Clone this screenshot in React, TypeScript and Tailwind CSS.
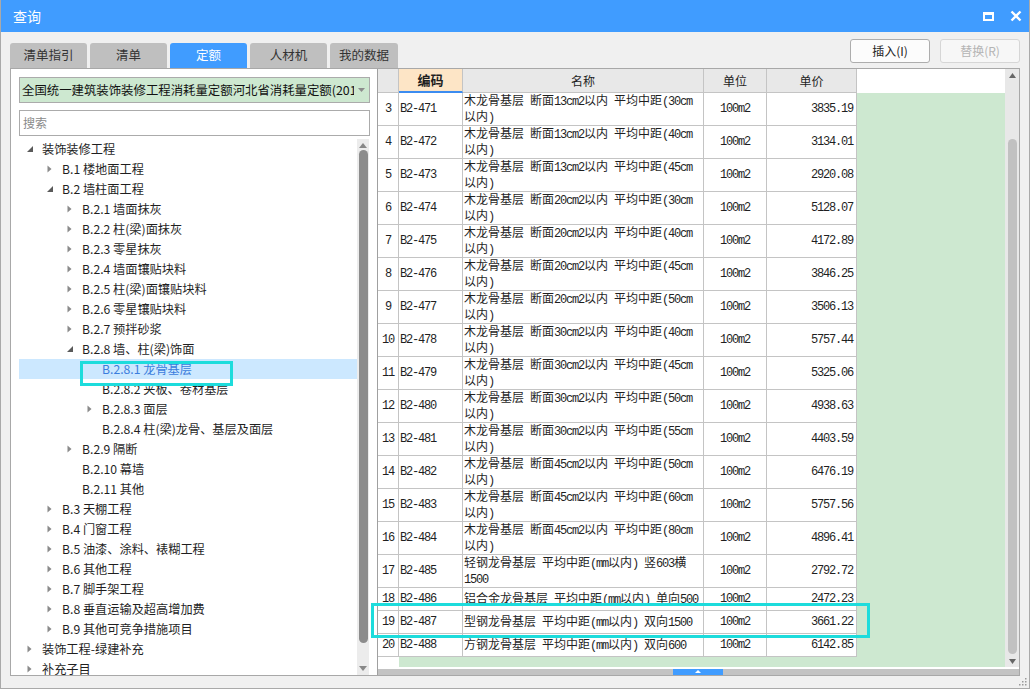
import React from 'react';

type TreeNode = { label: string; level: number; state: 'open' | 'closed' | 'leaf'; selected?: boolean };

const tree: TreeNode[] = [
  { label: '装饰装修工程', level: 0, state: 'open' },
  { label: 'B.1 楼地面工程', level: 1, state: 'closed' },
  { label: 'B.2 墙柱面工程', level: 1, state: 'open' },
  { label: 'B.2.1 墙面抹灰', level: 2, state: 'closed' },
  { label: 'B.2.2 柱(梁)面抹灰', level: 2, state: 'closed' },
  { label: 'B.2.3 零星抹灰', level: 2, state: 'closed' },
  { label: 'B.2.4 墙面镶贴块料', level: 2, state: 'closed' },
  { label: 'B.2.5 柱(梁)面镶贴块料', level: 2, state: 'closed' },
  { label: 'B.2.6 零星镶贴块料', level: 2, state: 'closed' },
  { label: 'B.2.7 预拌砂浆', level: 2, state: 'closed' },
  { label: 'B.2.8 墙、柱(梁)饰面', level: 2, state: 'open' },
  { label: 'B.2.8.1 龙骨基层', level: 3, state: 'leaf', selected: true },
  { label: 'B.2.8.2 夹板、卷材基层', level: 3, state: 'leaf' },
  { label: 'B.2.8.3 面层', level: 3, state: 'closed' },
  { label: 'B.2.8.4 柱(梁)龙骨、基层及面层', level: 3, state: 'leaf' },
  { label: 'B.2.9 隔断', level: 2, state: 'closed' },
  { label: 'B.2.10 幕墙', level: 2, state: 'leaf' },
  { label: 'B.2.11 其他', level: 2, state: 'leaf' },
  { label: 'B.3 天棚工程', level: 1, state: 'closed' },
  { label: 'B.4 门窗工程', level: 1, state: 'closed' },
  { label: 'B.5 油漆、涂料、裱糊工程', level: 1, state: 'closed' },
  { label: 'B.6 其他工程', level: 1, state: 'closed' },
  { label: 'B.7 脚手架工程', level: 1, state: 'closed' },
  { label: 'B.8 垂直运输及超高增加费', level: 1, state: 'closed' },
  { label: 'B.9 其他可竞争措施项目', level: 1, state: 'closed' },
  { label: '装饰工程-绿建补充', level: 0, state: 'closed' },
  { label: '补充子目', level: 0, state: 'closed' },
];

const indent = ['pl-[8px]', 'pl-[28px]', 'pl-[48px]', 'pl-[68px]'];

type Row = [string, string, string, string | null, string];

const wood = (sec: string, dist: string): [string, string] => [
  `木龙骨基层 断面${sec}cm2以内 平均中距(${dist}cm`,
  '以内)',
];

const rows: Row[] = [
  ['3', 'B2-471', ...wood('13', '30'), '3835.19'],
  ['4', 'B2-472', ...wood('13', '40'), '3134.01'],
  ['5', 'B2-473', ...wood('13', '45'), '2920.08'],
  ['6', 'B2-474', ...wood('20', '30'), '5128.07'],
  ['7', 'B2-475', ...wood('20', '40'), '4172.89'],
  ['8', 'B2-476', ...wood('20', '45'), '3846.25'],
  ['9', 'B2-477', ...wood('20', '50'), '3506.13'],
  ['10', 'B2-478', ...wood('30', '40'), '5757.44'],
  ['11', 'B2-479', ...wood('30', '45'), '5325.06'],
  ['12', 'B2-480', ...wood('30', '50'), '4938.63'],
  ['13', 'B2-481', ...wood('30', '55'), '4403.59'],
  ['14', 'B2-482', ...wood('45', '50'), '6476.19'],
  ['15', 'B2-483', ...wood('45', '60'), '5757.56'],
  ['16', 'B2-484', ...wood('45', '80'), '4896.41'],
  ['17', 'B2-485', '轻钢龙骨基层 平均中距(mm以内) 竖603横', '1500', '2792.72'],
  ['18', 'B2-486', '铝合金龙骨基层 平均中距(mm以内) 单向500', null, '2472.23'],
  ['19', 'B2-487', '型钢龙骨基层 平均中距(mm以内) 双向1500', null, '3661.22'],
  ['20', 'B2-488', '方钢龙骨基层 平均中距(mm以内) 双向600', null, '6142.85'],
];

const mono = "font-['Liberation_Mono',monospace] text-[12px] tracking-[-1.2px]";

function Mixed({ text }: { text: string }) {
  return (
    <>
      {text
        .split(/([\x20-\x7e]+)/)
        .filter(Boolean)
        .map((p, i) =>
          /^[\x20-\x7e]+$/.test(p) ? (
            <span key={i} className={mono}>
              {p}
            </span>
          ) : (
            <span key={i}>{p}</span>
          ),
        )}
    </>
  );
}

function TreeIcon({ state }: { state: TreeNode['state'] }) {
  if (state === 'open')
    return (
      <svg width="6" height="6" viewBox="0 0 6 6">
        <path d="M6 0 L6 6 L0 6 Z" fill="#5a5a5a" />
      </svg>
    );
  if (state === 'closed')
    return (
      <svg width="5" height="8" viewBox="0 0 5 8">
        <path d="M0.5 0.5 L4.5 4 L0.5 7.5 Z" fill="#8a8a8a" />
      </svg>
    );
  return null;
}

const tabs = ['清单指引', '清单', '定额', '人材机', '我的数据'];

export default function App() {
  return (
    <div className="relative flex h-[689px] w-[1030px] flex-col overflow-hidden border-x border-b border-[#a9a9a9] bg-[#f0f0f0] font-['Noto_Sans_CJK_SC','Noto_Sans',sans-serif] text-[12px] text-[#1f1f1f]">
      {/* title bar */}
      <div className="flex h-[32px] shrink-0 items-center justify-between bg-[#409cff] pl-[12px] pr-[7px]">
        <span className="text-[14px] text-white">查询</span>
        <div className="flex items-center gap-[16px]">
          <div className="h-[9px] w-[11px] border-2 border-t-[3px] border-white" />
          <svg width="12" height="12" viewBox="0 0 12 12">
            <path d="M1.5 1.5 L10.5 10.5 M10.5 1.5 L1.5 10.5" stroke="white" strokeWidth="2.4" />
          </svg>
        </div>
      </div>

      <div className="flex flex-1 flex-col px-[9px] pb-[12px] pt-[7px]">
        {/* tabs + buttons */}
        <div className="flex h-[29px] justify-between">
          <div className="flex gap-[3px] self-end">
            {tabs.map((t, i) => (
              <div
                key={t}
                className={
                  'flex h-[25px] items-center justify-center rounded-t-[3px] text-[12.5px] ' +
                  (i === 4 ? 'w-[68px] ' : 'w-[77px] ') +
                  (i === 2 ? 'bg-[#409cff] text-white' : 'bg-[#bfbfbf] text-[#333]')
                }
              >
                {t}
              </div>
            ))}
          </div>
          <div className="flex gap-[10px] pb-[5px]">
            <div className="flex h-[24px] w-[80px] items-center justify-center rounded-[3px] border border-[#adadad] bg-[#fcfcfc] text-[#222]">
              插入(I)
            </div>
            <div className="flex h-[24px] w-[80px] items-center justify-center rounded-[3px] border border-[#d6d6d6] bg-[#f7f7f7] text-[#b4b4b4]">
              替换(R)
            </div>
          </div>
        </div>

        {/* main panel */}
        <div className="flex h-[608px] border border-[#a8a8a8] bg-white">
          {/* left tree side */}
          <div className="flex w-[366px] flex-col pt-[8px]">
            <div className="ml-[8px] flex h-[26px] w-[351px] items-center border border-[#ababab] bg-[#cde8d0] pl-[2px] pr-[4px]">
              <span className="flex-1 overflow-hidden whitespace-nowrap text-[12.4px] text-[#111]">
                全国统一建筑装饰装修工程消耗量定额河北省消耗量定额(2012)
              </span>
              <svg width="7" height="4" viewBox="0 0 7 4" className="ml-[4px]">
                <path d="M0 0 L7 0 L3.5 4 Z" fill="#8c8c8c" />
              </svg>
            </div>
            <div className="ml-[8px] mt-[7px] flex h-[26px] w-[351px] items-center border border-[#ababab] bg-white pl-[3px] text-[#8a8a8a]">
              搜索
            </div>
            <div className="mt-[3px] flex min-h-0 flex-1 overflow-hidden">
              <div className="ml-[8px] w-[338px]">
                {tree.map((n) => (
                  <div
                    key={n.label}
                    className={
                      'flex h-[20px] items-center whitespace-nowrap ' +
                      indent[n.level] +
                      (n.selected ? ' bg-[#cce8ff] text-[#3b7ddd]' : '')
                    }
                  >
                    <div className="flex w-[15px] items-center">
                      <TreeIcon state={n.state} />
                    </div>
                    <span className="text-[12.2px] leading-[20px]">{n.label}</span>
                  </div>
                ))}
              </div>
              <div className="flex w-[12px] flex-col items-center bg-[#ececec] pt-[4px]">
                <svg width="8" height="5" viewBox="0 0 8 5">
                  <path d="M0 5 L4 0 L8 5 Z" fill="#888" />
                </svg>
                <div className="mt-[2px] h-[493px] w-[9px] rounded-full bg-[#8c8c8c]" />
                <div className="flex-1" />
                <svg width="8" height="5" viewBox="0 0 8 5" className="mb-[4px]">
                  <path d="M0 0 L8 0 L4 5 Z" fill="#888" />
                </svg>
              </div>
            </div>
          </div>

          {/* right grid side */}
          <div className="flex flex-1 flex-col border-l border-[#a0a0a0]">
            <div className="flex h-[598px]">
              <div className="flex flex-1 flex-col bg-[#cde8d0]">
                <div className="flex">
                  <div className="w-[479px] bg-white">
                    <div className="flex h-[24px] bg-[#e8e8e8]">
                      <div className="w-[21px] border-b border-r border-[#c4c4c4]" />
                      <div className="flex w-[64px] items-center justify-center border-b-2 border-r border-[#c4c4c4] border-b-[#3c8cf0] bg-[#fde5c6] text-[13px] font-bold">
                        编码
                      </div>
                      <div className="flex w-[241px] items-center justify-center border-b border-r border-[#c4c4c4]">名称</div>
                      <div className="flex w-[63px] items-center justify-center border-b border-r border-[#c4c4c4]">单位</div>
                      <div className="flex w-[90px] items-center justify-center border-b border-r border-[#c4c4c4]">单价</div>
                    </div>
                    {rows.map(([num, code, l1, l2, price]) => (
                      <div key={num} className={'flex ' + (l2 ? 'h-[33px]' : 'h-[23px]')}>
                        <div className={'flex w-[21px] items-center justify-center border-b border-r border-[#c4c4c4] ' + mono}>
                          {num}
                        </div>
                        <div className={'flex w-[64px] items-center border-b border-r border-[#c4c4c4] pl-[1px] ' + mono}>
                          {code}
                        </div>
                        <div className="flex w-[241px] flex-col justify-center overflow-hidden whitespace-nowrap border-b border-r border-[#c4c4c4] pl-[1px] leading-[14px]">
                          <div>
                            <Mixed text={l1} />
                          </div>
                          {l2 && (
                            <div>
                              <Mixed text={l2} />
                            </div>
                          )}
                        </div>
                        <div className={'flex w-[63px] items-center justify-center border-b border-r border-[#c4c4c4] ' + mono}>
                          100m2
                        </div>
                        <div className={'flex w-[90px] items-center justify-end border-b border-r border-[#c4c4c4] pr-[3px] ' + mono}>
                          {price}
                        </div>
                      </div>
                    ))}
                  </div>
                  <div className="flex flex-1 flex-col">
                    <div className="h-[24px] bg-white" />
                  </div>
                </div>
                <div className="flex flex-1">
                  <div className="w-[21px] bg-white" />
                  <div className="flex-1" />
                </div>
              </div>
              <div className="flex w-[14px] flex-col items-center bg-[#e8e8e8] pt-[4px]">
                <svg width="7" height="5" viewBox="0 0 7 5">
                  <path d="M0 5 L3.5 0 L7 5 Z" fill="#666" />
                </svg>
                <div className="mt-[61px] h-[515px] w-[9px] rounded-full bg-[#c1c1c1]" />
                <svg width="7" height="5" viewBox="0 0 7 5" className="mt-[5px]">
                  <path d="M0 0 L7 0 L3.5 5 Z" fill="#666" />
                </svg>
              </div>
            </div>
            <div className="h-[2px] bg-white" />
            <div className="flex h-[6px] bg-[#c3c3c3]">
              <div className="ml-[295px] flex h-full w-[50px] items-start justify-center bg-[#409cff] pt-[1px]">
                <svg width="6" height="3" viewBox="0 0 6 3">
                  <path d="M0 3 L3 0 L6 3 Z" fill="white" />
                </svg>
              </div>
            </div>
          </div>
        </div>
      </div>

      {/* resize grip */}
      <svg width="9" height="9" viewBox="0 0 9 9" className="absolute bottom-[2px] right-[2px]">
        {[
          [7, 1],
          [4, 4],
          [7, 4],
          [1, 7],
          [4, 7],
          [7, 7],
        ].map(([x, y]) => (
          <rect key={`${x}-${y}`} x={x} y={y} width="1.5" height="1.5" fill="#9a9a9a" />
        ))}
      </svg>

      {/* annotation boxes */}
      <div className="pointer-events-none absolute left-[79px] top-[361px] h-[25px] w-[153px] border-[3px] border-[#1ddcdc]" />
      <div className="pointer-events-none absolute left-[370px] top-[603px] h-[35px] w-[499px] border-[3px] border-[#1ddcdc]" />
    </div>
  );
}
